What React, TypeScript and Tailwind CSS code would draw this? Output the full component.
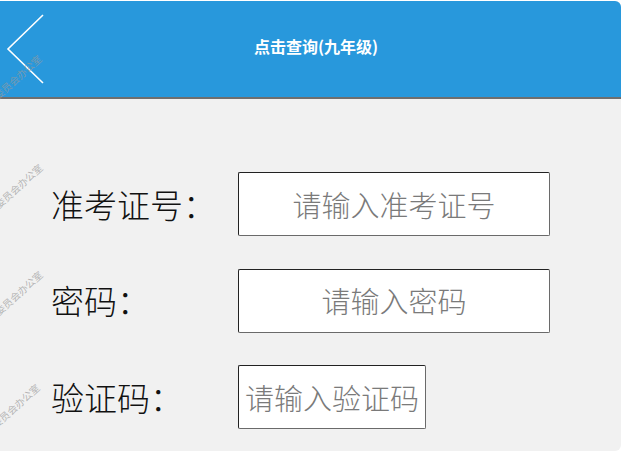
import React from "react";

const Watermark = ({ left, top }: { left: number; top: number }) => (
  <span
    className="absolute text-[10px] leading-none whitespace-nowrap text-[#9a9a9a]/70 origin-right -rotate-[42deg] font-['Noto_Sans_CJK_SC',sans-serif] pointer-events-none"
    style={{ left, top }}
  >
    教育委员会办公室
  </span>
);

const Row = ({ label, placeholder, w }: { label: string; placeholder: string; w: string }) => (
  <div className="flex items-center pl-[51px]">
    <div className="w-[187px] text-[33px] leading-none font-light text-[#111]">{label}</div>
    <div
      className={`${w} h-[64px] bg-white rounded-[2px] border border-[#6a6a6a] border-t-[#222] border-l-[#222] flex items-center justify-center text-[29px] leading-none font-light text-[#7a7a7a] whitespace-nowrap overflow-hidden`}
    >
      {placeholder}
    </div>
  </div>
);

export default function App() {
  return (
    <div className="w-[626px] h-[454px] bg-white relative overflow-hidden font-['Noto_Sans_CJK_SC',sans-serif]">
      <div className="w-[621px] h-[450px] mt-px bg-[#f1f1f1] rounded-tr-[6px] rounded-br-[6px] overflow-hidden flex flex-col">
        <header className="h-[98px] shrink-0 bg-[#2898dc] border-b-2 border-[#6f6f6f] flex items-center">
          <svg width="50" height="96" viewBox="0 0 50 96" className="shrink-0">
            <polyline points="43,14 8,48 43,82" fill="none" stroke="#ffffff" strokeWidth="1.6" />
          </svg>
          <div className="ml-[204px] mb-[7px] text-white font-bold text-[16px] leading-none">点击查询(九年级)</div>
        </header>
        <main className="flex flex-col gap-[32.5px] pt-[73px]">
          <Row label="准考证号：" placeholder="请输入准考证号" w="w-[312px]" />
          <Row label="密码：" placeholder="请输入密码" w="w-[312px]" />
          <Row label="验证码：" placeholder="请输入验证码" w="w-[188px]" />
        </main>
      </div>
      <Watermark left={-40} top={52} />
      <Watermark left={-39} top={161} />
      <Watermark left={-39} top={268} />
      <Watermark left={-42} top={381} />
    </div>
  );
}
